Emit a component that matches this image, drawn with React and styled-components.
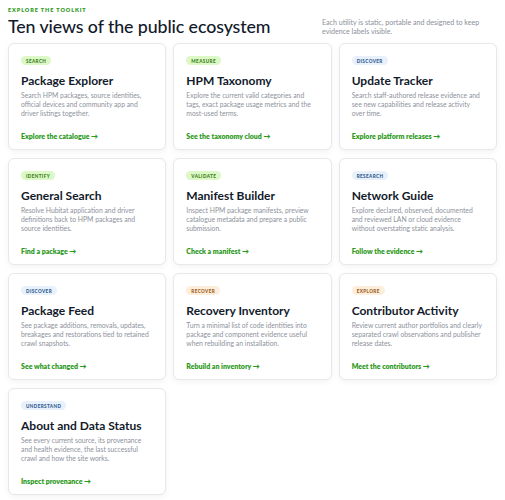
import styled, { createGlobalStyle } from 'styled-components'

const GlobalStyle = createGlobalStyle`
  body {
    margin: 0;
    background: #ffffff;
    font-family: Lato, "Noto Sans", sans-serif;
    color: #111827;
  }
`

const Page = styled.div`
  padding: 7px 8px 8px 8px;
`

const Header = styled.header`
  display: flex;
  justify-content: space-between;
  align-items: flex-end;
  margin-bottom: 6px;
`

const Eyebrow = styled.p`
  margin: 0 0 2px 0;
  font-size: 5.5px;
  font-weight: 800;
  letter-spacing: 0.9px;
  color: #2e9a1c;
  text-transform: uppercase;
`

const Title = styled.h1`
  margin: 0;
  font-size: 17.8px;
  font-weight: 500;
  letter-spacing: -0.1px;
  color: #121a2b;
  line-height: 22px;
`

const Lede = styled.p`
  margin: 0 10px 1px 0;
  width: 165px;
  font-size: 7.1px;
  line-height: 9px;
  color: #8a8f9a;
`

const Grid = styled.div`
  display: grid;
  grid-template-columns: repeat(3, 1fr);
  gap: 8px 7px;
`

const Card = styled.article`
  display: flex;
  flex-direction: column;
  height: 107px;
  box-sizing: border-box;
  padding: 12px 12px 8px 12px;
  border: 1px solid #e6e8ec;
  border-radius: 6px;
  background: #fff;
  box-shadow: 0 2px 6px rgba(17, 24, 39, 0.05);
`

const tones = {
  green: { bg: '#dcf8c6', fg: '#3c7d1b' },
  blue: { bg: '#e8f1fb', fg: '#2d5a8e' },
  orange: { bg: '#fdeedb', fg: '#9a5b1c' },
}

const Badge = styled.span`
  align-self: flex-start;
  padding: 1.5px 5px;
  border-radius: 6px;
  font-size: 4.6px;
  font-weight: 900;
  letter-spacing: 0.4px;
  text-transform: uppercase;
  background: ${p => tones[p.$tone].bg};
  color: ${p => tones[p.$tone].fg};
`

const CardTitle = styled.h2`
  margin: 9px 0 3px 0;
  font-size: 12px;
  font-weight: 700;
  color: #121a2b;
  line-height: 14px;
`

const Desc = styled.p`
  margin: 0;
  font-size: 6.8px;
  line-height: 8.8px;
  color: #8d929c;
`

const Link = styled.a`
  margin-top: auto;
  font-size: 7px;
  font-weight: 800;
  color: #2e9a1c;
  text-decoration: none;
  line-height: 10px;
`

const tools = [
  { tag: 'Search', tone: 'green', title: 'Package Explorer', text: 'Search HPM packages, source identities, official devices and community app and driver listings together.', link: 'Explore the catalogue' },
  { tag: 'Measure', tone: 'green', title: 'HPM Taxonomy', text: 'Explore the current valid categories and tags, exact package usage metrics and the most-used terms.', link: 'See the taxonomy cloud' },
  { tag: 'Discover', tone: 'blue', title: 'Update Tracker', text: 'Search staff-authored release evidence and see new capabilities and release activity over time.', link: 'Explore platform releases' },
  { tag: 'Identify', tone: 'green', title: 'General Search', text: 'Resolve Hubitat application and driver definitions back to HPM packages and source identities.', link: 'Find a package' },
  { tag: 'Validate', tone: 'green', title: 'Manifest Builder', text: 'Inspect HPM package manifests, preview catalogue metadata and prepare a public submission.', link: 'Check a manifest' },
  { tag: 'Research', tone: 'blue', title: 'Network Guide', text: 'Explore declared, observed, documented and reviewed LAN or cloud evidence without overstating static analysis.', link: 'Follow the evidence' },
  { tag: 'Discover', tone: 'blue', title: 'Package Feed', text: 'See package additions, removals, updates, breakages and restorations tied to retained crawl snapshots.', link: 'See what changed' },
  { tag: 'Recover', tone: 'orange', title: 'Recovery Inventory', text: 'Turn a minimal list of code identities into package and component evidence useful when rebuilding an installation.', link: 'Rebuild an inventory' },
  { tag: 'Explore', tone: 'orange', title: 'Contributor Activity', text: 'Review current author portfolios and clearly separated crawl observations and publisher release dates.', link: 'Meet the contributors' },
  { tag: 'Understand', tone: 'blue', title: 'About and Data Status', text: 'See every current source, its provenance and health evidence, the last successful crawl and how the site works.', link: 'Inspect provenance' },
]

export default function App() {
  return (
    <>
      <GlobalStyle />
      <Page>
        <Header>
          <div>
            <Eyebrow>Explore the toolkit</Eyebrow>
            <Title>Ten views of the public ecosystem</Title>
          </div>
          <Lede>Each utility is static, portable and designed to keep evidence labels visible.</Lede>
        </Header>
        <Grid>
          {tools.map(t => (
            <Card key={t.title}>
              <Badge $tone={t.tone}>{t.tag}</Badge>
              <CardTitle>{t.title}</CardTitle>
              <Desc>{t.text}</Desc>
              <Link href="#">{t.link} →</Link>
            </Card>
          ))}
        </Grid>
      </Page>
    </>
  )
}
